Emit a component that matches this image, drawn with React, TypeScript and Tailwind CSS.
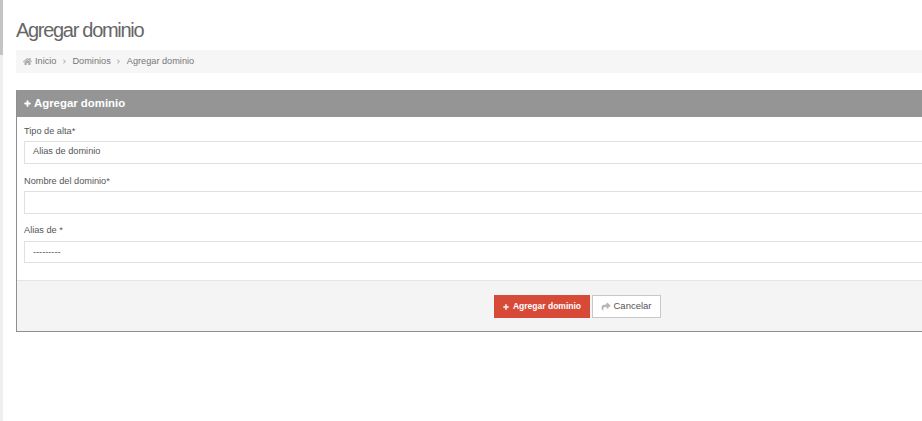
import { FaAngleRight, FaHome, FaPlus, FaShare } from 'react-icons/fa';

function Field({ label, value, className, boxClass }: { label: string; value?: string; className?: string; boxClass: string }) {
  return (
    <div className={className}>
      <label className="block text-[9.2px] leading-[12px] text-[#555]">{label}</label>
      <div className={`mt-[4px] border border-r-0 border-[#e0e0e0] bg-white pl-[8px] text-[9.2px] leading-[19px] text-[#555] ${boxClass}`}>
        {value}
      </div>
    </div>
  );
}

export default function App() {
  return (
    <div className="flex h-[421px] w-[922px] overflow-hidden bg-white font-['Liberation_Sans',Arial,sans-serif]">
      {/* Sidebar edge */}
      <div className="w-[3px] shrink-0 bg-[#efefef]">
        <div className="h-[55px] bg-[#c4c4c4]" />
      </div>

      <div className="w-[1000px] shrink-0 pl-[13px]">
        <h1 className="pt-[19px] text-[20px] leading-[23px] tracking-[-1.3px] text-[#666]">Agregar dominio</h1>

        <div className="mt-[8px] flex h-[23px] items-center bg-[#f6f6f6] pl-[7px] text-[9.2px] text-[#777]">
          <FaHome className="mr-[3px] h-[9px] w-[9px] text-[#aaa]" />
          <span>Inicio</span>
          <FaAngleRight className="mx-[4.5px] h-[7px] w-[7px] text-[#bbb]" />
          <span>Dominios</span>
          <FaAngleRight className="mx-[4.5px] h-[7px] w-[7px] text-[#bbb]" />
          <span>Agregar dominio</span>
        </div>

        {/* Panel */}
        <div className="mt-[17px] border-b border-l border-[#8f8f8f]">
          <div className="flex h-[27px] items-center gap-[3px] bg-[#959595] pl-[7px] text-[11.4px] font-bold text-white">
            <FaPlus className="h-[7px] w-[7px] stroke-current stroke-[40]" />
            <span>Agregar dominio</span>
          </div>

          <div className="h-[163px] px-[7px] pt-[8px]">
            <Field label="Tipo de alta*" value="Alias de dominio" boxClass="h-[23px]" />
            <Field label="Nombre del dominio*" className="mt-[11px]" boxClass="h-[23px]" />
            <Field label="Alias de *" value="---------" className="mt-[10px]" boxClass="mt-[5px] h-[22px] leading-[20px]" />
          </div>

          <div className="flex h-[51px] items-start border-t border-[#e4e4e4] bg-[#f4f4f4] pl-[477px] pt-[14px]">
            <button className="flex h-[23px] w-[96px] items-center justify-center gap-[4px] bg-[#d84a38] text-[8.5px] font-bold text-white">
              <FaPlus className="h-[6px] w-[6px] stroke-current stroke-[40]" />
              Agregar dominio
            </button>
            <button className="ml-[2px] flex h-[23px] w-[69px] items-center justify-center gap-[2px] border border-[#c8c8c8] bg-white text-[9.5px] text-[#555]">
              <FaShare className="h-[9px] w-[10px] text-[#b5b5b5]" />
              Cancelar
            </button>
          </div>
        </div>
      </div>
    </div>
  );
}
